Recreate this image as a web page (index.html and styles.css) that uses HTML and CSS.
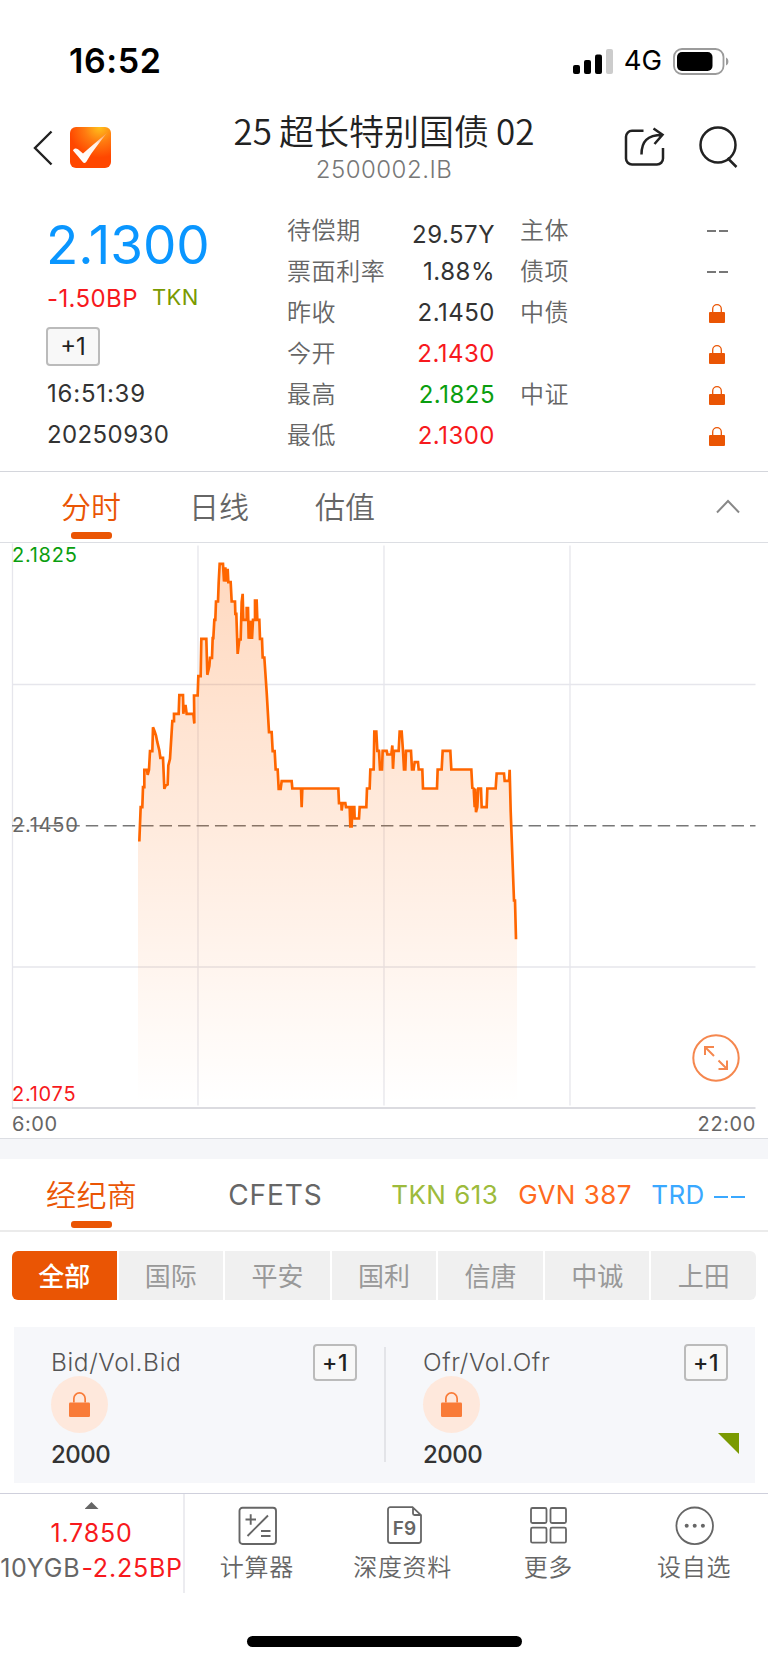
FILE: index.html
```html
<!DOCTYPE html>
<html lang="zh-CN">
<head>
<meta charset="utf-8">
<title>25超长特别国债02</title>
<link rel="stylesheet" href="styles.css">
</head>
<body>
<svg width="0" height="0" class="defs">
  <symbol id="lock" viewBox="0 0 16 19">
    <path d="M3.700 8V5a4.300 4.300 0 0 1 8.600 0v3" fill="none" stroke="currentColor" stroke-width="1.300"/>
    <rect x="0" y="8" width="16" height="11" rx="1" fill="currentColor"/>
  </symbol>
</svg>

<div class="status">
  <span class="time">16:52</span>
  <span class="status-right">
    <svg width="40" height="25" viewBox="0 0 40 25">
      <rect x="0" y="16" width="7" height="9" rx="2"/>
      <rect x="11" y="11" width="7" height="14" rx="2"/>
      <rect x="22" y="5.500" width="7" height="19.500" rx="2"/>
      <rect x="33" y="0" width="7" height="25" rx="2" fill="#cccccc"/>
    </svg>
    <span class="net">4G</span>
    <svg width="57" height="27" viewBox="0 0 57 27">
      <rect x="1" y="1" width="49.500" height="25" rx="8" fill="none" stroke="#9b9b9b" stroke-width="1.800"/>
      <rect x="4" y="4" width="35.500" height="19" rx="5"/>
      <path d="M53 9.500c3.200 1.300 3.200 6.700 0 8z" fill="#9b9b9b"/>
    </svg>
  </span>
</div>

<header class="header">
  <div class="head-left">
    <svg width="20" height="36" viewBox="0 0 20 36" fill="none" stroke="#222" stroke-width="2.400"><path d="M18.500 1.500 2 18l16.500 16.500"/></svg>
    <svg class="logo" width="41" height="41" viewBox="0 0 41 41">
      <defs>
        <radialGradient id="lg" cx=".72" cy="0" r=".75"><stop offset="0" stop-color="#ffc21c"/><stop offset=".5" stop-color="#ff7a10"/><stop offset="1" stop-color="#ff4700"/></radialGradient>
        <linearGradient id="ck" x1=".9" y1="0" x2=".3" y2="1"><stop offset="0" stop-color="#ff9a50"/><stop offset=".35" stop-color="#fff0e6"/><stop offset="1" stop-color="#fff"/></linearGradient>
      </defs>
      <rect width="41" height="41" rx="6" fill="url(#lg)"/>
      <path d="M3 23.500c1-2 3-2.500 5-1.200l5 4.200c9-8 17-14.500 24-20.500C30 15 22 24.500 16.500 34.500c-1 1.800-2.700 1.800-4 .2C9.500 31 6 27 3 23.500z" fill="url(#ck)"/>
    </svg>
  </div>
  <div class="head-title">
    <h1><span>25</span><span>超长特别国债</span><span>02</span></h1>
    <div class="code">2500002.IB</div>
  </div>
  <div class="head-right">
    <svg width="42" height="42" viewBox="0 0 42 42" fill="none" stroke="#222" stroke-width="2.500">
      <path d="M19.500 4.800H8a6 6 0 0 0-6 6V32.500a6 6 0 0 0 6 6H33a6 6 0 0 0 6-6V22"/>
      <path d="M17.500 28.500C17.500 15.500 23 9 38.500 8.700M29.500 2.500 38.500 8.700 30.500 18"/>
    </svg>
    <svg width="42" height="42" viewBox="0 0 42 42" fill="none" stroke="#222" stroke-width="2.500">
      <circle cx="20" cy="19" r="17.500"/><path d="M29.500 32 38.500 41"/>
    </svg>
  </div>
</header>

<section class="quote">
  <div class="q-main">
    <div class="price">2.1300</div>
    <div class="chg"><span class="red">-1.50BP</span><span class="tkn">TKN</span></div>
    <span class="plus">+1</span>
    <div class="stamp clock">16:51:39</div>
    <div class="stamp">20250930</div>
  </div>
  <dl class="q-list">
    <dt>待偿期</dt><dd class="low">29.57Y</dd>
    <dt>票面利率</dt><dd>1.88%</dd>
    <dt>昨收</dt><dd>2.1450</dd>
    <dt>今开</dt><dd class="red">2.1430</dd>
    <dt>最高</dt><dd class="green">2.1825</dd>
    <dt>最低</dt><dd class="red">2.1300</dd>
  </dl>
  <dl class="q-list q-rate">
    <dt>主体</dt><dd><i></i><i></i></dd>
    <dt>债项</dt><dd><i></i><i></i></dd>
    <dt>中债</dt><dd><svg class="lock"><use href="#lock"/></svg></dd>
    <dt></dt><dd><svg class="lock"><use href="#lock"/></svg></dd>
    <dt>中证</dt><dd><svg class="lock"><use href="#lock"/></svg></dd>
    <dt></dt><dd><svg class="lock"><use href="#lock"/></svg></dd>
  </dl>
</section>

<nav class="tabs">
  <span class="tab on">分时</span><span class="tab t2">日线</span><span class="tab t3">估值</span>
  <svg class="fold" width="24" height="15" viewBox="0 0 24 15" fill="none" stroke="#888" stroke-width="2"><path d="M1 13.500 12 2l11 11.500"/></svg>
</nav>

<section class="chart">
  <svg class="plot" width="768" height="565" viewBox="0 0 768 565">
    <defs><linearGradient id="area" gradientUnits="userSpaceOnUse" x1="0" y1="54" x2="0" y2="1680"><stop offset="0" stop-color="#ff6600" stop-opacity=".25"/><stop offset=".5" stop-color="#ff6600" stop-opacity=".13"/><stop offset="1" stop-color="#ff6600" stop-opacity="0"/></linearGradient></defs>
    <g stroke="#e6e6ec" stroke-width="1.300" fill="none">
      <path d="M12.500 0V565M198 2V562M384 2V562M570 2V562M13 141H755.500M13 423.500H755.500"/>
    </g>
    <path d="M12 282.300H755.500" stroke="#777" stroke-width="1.400" stroke-dasharray="12.400 6.050"/>
    <g transform="scale(.33333)">
      <path fill="url(#area)" d="M414 1680V894L422 791 430 731 433 679H447L450 623H457L459 551 478 621 489 643 493 736 503 723 517 533 522 511H536L538 455H549L560 511H580L583 456H593L595 398H602L604 286H619L622 394 630 343 636 341 643 229 648 174H654L659 61H669L685 116H692L695 174H705L713 331 718 288H722L725 176 728 151 730 229H778L780 286H786L788 342H793L807 566H815L818 623H824L827 678H833L836 736H842L845 713H875L877 735H1015L1017 779H1036L1038 791H1049L1051 849H1055L1057 791H1063L1064 825H1077L1079 791H1099L1101 735H1109L1111 678H1121L1123 564H1129L1132 622H1196L1199 564H1205L1209 622H1233L1236 678H1267L1269 735H1311L1313 678H1325L1328 622H1351L1354 678H1414L1417 733 1428 806 1435 735H1443L1445 791H1460L1462 735H1487L1490 690H1512L1514 712H1527L1529 679 1542 1071 1551 1187V1680z"/>
      <path fill="none" stroke="#ff6600" stroke-width="8" d="M418 894L422 791H427L429 731H433V679H441L443 694 447 679 450 623H457L459 551 464 564 468 576 472 596 478 621 481 643H489L493 736 497 726 503 723 505 666 510 646 517 533H522V511H536L538 455H549L550 511 553 488H557L560 511H580L583 540 582 456H593L595 398H602L604 286H619L622 394 628 368 630 343H636L638 284H640L643 229H646L648 174H654L656 118 659 61H669L672 114 676 72 680 114 683 76 685 116H692L695 174H705L706 211H709L713 331 718 288H722L725 176 728 151 730 229H740V194H744L746 286 748 232 751 286 754 232 756 286 759 229H765V171H770L772 229H778L780 286H786L788 342H793L800 446 807 566H815L818 623H824L827 678H833L836 736H842L845 713H875L877 735H903L905 791 907 735H1015L1017 779H1024L1025 801 1028 779H1036L1038 791H1049L1051 849H1055L1057 791H1063L1064 825H1077L1079 791H1099L1101 735H1109L1111 678H1121L1123 564H1129L1132 622H1137L1140 678H1146L1148 622H1160L1162 633H1174L1177 606 1179 676 1182 622H1196L1199 564H1205L1209 622 1212 678H1216L1218 622H1233L1236 678H1241L1244 656H1254L1256 678H1267L1269 735H1311L1313 678H1325L1328 622H1351L1354 678H1414L1417 733 1421 735 1424 791 1426 735 1428 806 1432 791 1435 735H1443L1445 791H1460L1462 735H1487L1490 690H1512L1514 712H1527L1529 679 1532 801 1542 1071H1545L1548 1187"/>
    </g>
    <path d="M12 564.500H755.500" stroke="#cfcfd6" stroke-width="1.500"/>
  </svg>
  <span class="y-label y-top">2.1825</span>
  <span class="y-label y-mid">2.1450</span>
  <span class="y-label y-low">2.1075</span>
  <svg class="expand" width="48" height="48" viewBox="0 0 48 48" fill="none" stroke="#f5874e" stroke-width="2">
    <circle cx="24" cy="24" r="22.700"/>
    <path d="M22 22 13 13M13 21V13H22M26.500 26.500 35 35M35 26.500V35H26.500"/>
  </svg>
  <div class="x-axis"><span>6:00</span><span>22:00</span></div>
</section>

<nav class="brokers">
  <span class="tab on">经纪商</span>
  <span class="cfets">CFETS</span>
  <span class="stat s1">TKN 613</span><span class="stat s2">GVN 387</span><span class="stat s3">TRD <i></i><i></i></span>
</nav>

<div class="segments">
  <span class="on">全部</span><span>国际</span><span>平安</span><span>国利</span><span>信唐</span><span>中诚</span><span>上田</span>
</div>

<section class="card">
  <div class="side">
    <div class="side-head"><span>Bid/Vol.Bid</span><b class="plus">+1</b></div>
    <span class="badge"><svg width="21" height="25"><use href="#lock"/></svg></span>
    <div class="vol">2000</div>
  </div>
  <div class="rule"></div>
  <div class="side ofr">
    <div class="side-head"><span>Ofr/Vol.Ofr</span><b class="plus">+1</b></div>
    <span class="badge"><svg width="21" height="25"><use href="#lock"/></svg></span>
    <div class="vol">2000</div>
    <i class="corner"></i>
  </div>
</section>

<footer class="bottom">
  <div class="ticker">
    <i class="up"></i>
    <div class="red t-price">1.7850</div>
    <div class="t-line"><span>10YGB</span><span class="red">-2.25BP</span></div>
  </div>
  <div class="act">
    <svg width="40" height="40" viewBox="0 0 40 40" fill="none" stroke="#666" stroke-width="1.900">
      <rect x="1.500" y="1.700" width="36.500" height="36.300" rx="3"/>
      <path d="M7.500 13.500H18M12.700 8.300V18.700M9.500 30 30 9.500M23 25H32.500M23 30H32.500"/>
    </svg>
    <span>计算器</span>
  </div>
  <div class="act">
    <svg width="40" height="40" viewBox="0 0 40 40" fill="none" stroke="#666" stroke-width="1.800">
      <path d="M6.300 1.200H28.500L37 9.200V34.500a2.500 2.500 0 0 1-2.500 2.500H6.500A2.500 2.500 0 0 1 4 34.500V3.500A2.300 2.300 0 0 1 6.300 1.200M29 1.500V7.500a1.500 1.500 0 0 0 1.500 1.500H36.500"/>
      <text x="20.500" y="28.500" text-anchor="middle" class="f9">F9</text>
    </svg>
    <span>深度资料</span>
  </div>
  <div class="act">
    <svg width="40" height="40" viewBox="0 0 40 40" fill="none" stroke="#666" stroke-width="1.800">
      <rect x="2" y="2" width="15.500" height="15" rx="1.500"/><rect x="21.500" y="2" width="15.500" height="15" rx="1.500"/>
      <rect x="2" y="21.700" width="15.500" height="15" rx="1.500"/><rect x="21.500" y="21.700" width="15.500" height="15" rx="1.500"/>
    </svg>
    <span>更多</span>
  </div>
  <div class="act">
    <svg width="40" height="40" viewBox="0 0 40 40" fill="none" stroke="#666" stroke-width="1.800">
      <circle cx="19.700" cy="19.800" r="18.300"/>
      <g fill="#666" stroke="none"><circle cx="11.700" cy="19.800" r="2"/><circle cx="19.700" cy="19.800" r="2"/><circle cx="27.900" cy="19.800" r="2"/></g>
    </svg>
    <span>设自选</span>
  </div>
</footer>
<div class="home"></div>
</body>
</html>
```

FILE: styles.css
```css
* { box-sizing: border-box; margin: 0; padding: 0; }
body {
  width: 768px;
  height: 1663px;
  background: #fff;
  color: #333;
  font: 400 24px/1 Inter, "Noto Sans CJK SC", sans-serif;
  white-space: nowrap;
  overflow: hidden;
}
svg { display: block; flex: none; }
i { font-style: normal; }
.defs { position: absolute; }
.red { color: #f7191d; }
.green { color: #0a9e0f; }

.status { height: 110px; padding: 43px 38px 0 69px; display: flex; justify-content: space-between; color: #000; }
.time { font-size: 34px; line-height: 36px; font-weight: 600; letter-spacing: .6px; }
.status-right { display: flex; align-items: center; height: 36px; }
.net { font-size: 27.5px; margin: 0 11px 0 11px; }

.header { height: 94px; padding: 0 28px 0 33px; display: grid; grid-template-columns: 1fr auto 1fr; }
.head-left { display: flex; gap: 17px; align-items: center; height: 75px; }
.head-title { display: flex; flex-direction: column; align-items: center; margin-left: -5px; }
h1 { font: 350 35px/40px "Noto Sans CJK SC", sans-serif; color: #222; display: flex; gap: 7px; }
.code { color: #777; font-weight: 350; font-size: 24px; line-height: 40px; letter-spacing: .5px; }
.head-right { display: flex; gap: 32px; justify-content: flex-end; padding-top: 16px; }

.quote { height: 268px; display: flex; padding: 6px 0 0 47px; border-bottom: 1px solid #d4d6dc; }
.q-main { width: 240px; }
.price { font-size: 53px; line-height: 70px; color: #0a96ff; margin-left: -1px; letter-spacing: -.1px; }
.chg { display: flex; gap: 14px; line-height: 37px; letter-spacing: .4px; }
.tkn { font-size: 22px; color: #7a9a01; line-height: 35px; }
.plus { display: flex; align-items: center; justify-content: center; border: 2px solid #bbb; border-radius: 4px; background: #f8f8f8; color: #222; }
.q-main .plus { width: 54px; height: 39px; margin: 10px 0 0 -1px; }
.stamp { line-height: 41px; letter-spacing: .4px; }
.clock { margin-top: 7px; letter-spacing: .8px; }
.q-list { display: grid; grid-template-columns: auto auto; grid-auto-rows: 41px; width: 208px; justify-content: space-between; line-height: 41px; }
.q-list dt { color: #666; font-family: "Noto Sans CJK SC", sans-serif; font-weight: 350; letter-spacing: .6px; line-height: 37px; }
.q-list dd { text-align: right; letter-spacing: .5px; }
.q-list .low { padding-top: 4px; }
.q-rate { margin-left: 25px; width: 208px; }
.q-rate dd { display: flex; align-items: center; justify-content: flex-end; gap: 3px; padding-top: 1px; }
.q-rate i { width: 9px; height: 2px; background: #777; }
.lock { width: 16px; height: 19px; color: #ea5504; margin: 1px 3px 0 0; }

.tabs { height: 71px; display: flex; border-bottom: 1px solid #dcdee3; padding-left: 61px; font: 350 30px/67px "Noto Sans CJK SC", sans-serif; color: #666; }
.tab { display: flex; flex-direction: column; align-items: center; height: 67px; }
.tab.on { color: #ea5504; }
.tab.on::after { content: ""; width: 41px; height: 7px; border-radius: 3px; background: #ea5504; flex: none; margin-top: -7px; }
.t2 { margin-left: 68px; }
.t3 { margin-left: 66px; }
.fold { margin: 27px 28px 0 auto; }

.chart { height: 596px; position: relative; border-bottom: 1px solid #dcdee3; }
.plot { height: 566px; }
.y-label { position: absolute; left: 12px; font-size: 20px; line-height: 24px; letter-spacing: .75px; color: #666; }
.y-top { top: 0; color: #0a9e0f; }
.y-mid { top: 270px; }
.y-low { top: 539px; color: #f7191d; }
.expand { position: absolute; left: 692px; top: 491px; }
.x-axis { display: flex; justify-content: space-between; padding: 0 12px 0 12px; font-size: 20px; line-height: 31px; letter-spacing: .6px; color: #666; }

.brokers { height: 93px; border-top: 20px solid #f5f6f9; border-bottom: 2px solid #ebebeb; display: flex; padding-left: 46px; font: 350 30px/68px "Noto Sans CJK SC", sans-serif; }
.brokers .tab { height: 68px; letter-spacing: .4px; }
.brokers .tab.on::after { margin-top: -6px; }
.cfets { font-family: Inter, sans-serif; font-size: 28px; line-height: 73px; font-weight: 400; color: #666; letter-spacing: .9px; margin-left: 91px; width: 163px; }
.stat { font: 400 26px/72px Inter, sans-serif; letter-spacing: .45px; }
.s1 { color: #9dbb3c; width: 127px; }
.s2 { color: #ff6a20; width: 133px; }
.s3 { color: #3aa8ff; display: flex; align-items: center; gap: 3px; }
.s3 i { width: 14px; height: 2px; background: #3aa8ff; margin-top: 4px; }
.s3 i:first-of-type { margin-left: 6px; }

.segments { margin: 19px 12px 0; height: 49px; display: flex; gap: 2px; border-radius: 6px; overflow: hidden; }
.segments span { flex: 1; background: #f0f0f0; color: #999; font: 400 26px/47px "Noto Sans CJK SC", sans-serif; text-align: center; }
.segments .on { background: #ea5504; color: #fff; font-weight: 500; }

.card { margin: 27px 13px 0 14px; height: 156px; background: #f6f7fa; display: flex; padding: 17px 26px 0 37px; }
.side { flex: none; width: 306px; position: relative; }
.side-head { display: flex; justify-content: space-between; height: 32px; font-weight: 300; font-size: 24.5px; line-height: 36px; letter-spacing: .6px; color: #555; }
.card .plus { width: 44px; height: 37px; font-weight: 500; font-size: 23px; }
.badge { display: flex; align-items: center; justify-content: center; width: 57px; height: 57px; border-radius: 50%; background: #fee8dc; color: #f97b38; }
.vol { font-weight: 500; line-height: 43px; color: #333; letter-spacing: -.5px; }
.rule { width: 2px; height: 115px; margin: 3px 37px 0 27px; background: #e3e4e8; }
.ofr { width: 305px; }
.corner { position: absolute; right: -11px; top: 89px; width: 21px; height: 21px; background: #7a9a01; clip-path: polygon(0 0, 100% 0, 100% 100%); }

.bottom { margin-top: 10px; height: 100px; border-top: 1px solid #cfd0dc; display: flex; }
.ticker { width: 185px; flex: none; border-right: 2px solid #ececf0; display: flex; flex-direction: column; align-items: center; padding-top: 8px; font-size: 25px; letter-spacing: .8px; }
.up { width: 14px; height: 7px; background: #666; clip-path: polygon(50% 0, 100% 100%, 0 100%); }
.t-price { line-height: 34px; margin-top: 7px; }
.t-line { display: flex; color: #666; line-height: 37px; gap: 1px; }
.act { flex: 1; display: flex; flex-direction: column; align-items: center; padding-top: 12px; color: #666; font: 350 24px/36px "Noto Sans CJK SC", sans-serif; letter-spacing: .7px; }
.act span { margin: 2px 2px 0 0; }
.f9 { font: 600 19px Inter, sans-serif; fill: #666; stroke: none; letter-spacing: 0; }
.home { width: 275px; height: 11px; border-radius: 6px; background: #000; margin: 43px 0 0 247px; }
```
